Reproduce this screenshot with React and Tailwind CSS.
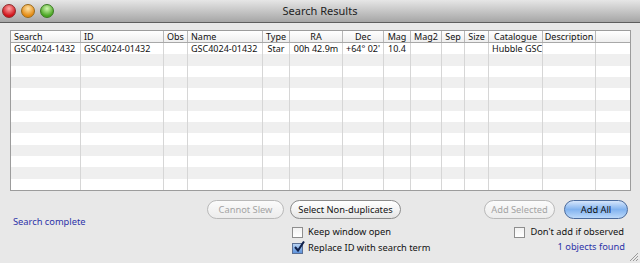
import React from "react";

const cols = [
  { name: "Search", w: 70, align: "text-left pl-[3px]" },
  { name: "ID", w: 83, align: "text-left pl-[3px]" },
  { name: "Obs", w: 24, align: "text-center" },
  { name: "Name", w: 75, align: "text-left pl-[3px]" },
  { name: "Type", w: 27, align: "text-center" },
  { name: "RA", w: 53, align: "text-center" },
  { name: "Dec", w: 41, align: "text-center" },
  { name: "Mag", w: 27, align: "text-center" },
  { name: "Mag2", w: 31, align: "text-center" },
  { name: "Sep", w: 23, align: "text-center" },
  { name: "Size", w: 24, align: "text-center" },
  { name: "Catalogue", w: 54, align: "text-center" },
  { name: "Description", w: 53, align: "text-center" },
  { name: "", w: 34, align: "text-center" },
];

const data = [
  { v: "GSC4024-1432", a: "text-left pl-[3px]" },
  { v: "GSC4024-01432", a: "text-left pl-[3px]" },
  { v: "", a: "" },
  { v: "GSC4024-01432", a: "text-left pl-[3px]" },
  { v: "Star", a: "text-center" },
  { v: "00h 42.9m", a: "text-center" },
  { v: "+64° 02'", a: "text-center" },
  { v: "10.4", a: "text-left pl-[4px]" },
  { v: "", a: "" },
  { v: "", a: "" },
  { v: "", a: "" },
  { v: "Hubble GSC", a: "text-left pl-[3px]" },
  { v: "", a: "" },
  { v: "", a: "" },
];

function Light({ from, to, border }) {
  return (
    <div
      className="w-[14px] h-[14px] rounded-full border"
      style={{
        background: `radial-gradient(circle at 50% 30%, ${from} 0%, ${to} 70%)`,
        borderColor: border,
      }}
    />
  );
}

function Btn({ children, w, disabled, primary }) {
  let cls =
    "h-[19px] rounded-full border flex items-center justify-center text-[9.3px] leading-none shrink-0 ";
  if (primary) {
    cls +=
      "border-[#4b6b9c] text-[#111] bg-gradient-to-b from-[#d6e6fb] via-[#82b3ef] to-[#bcd9fa]";
  } else if (disabled) {
    cls += "border-[#b9b9b9] text-[#a3a3a3] bg-gradient-to-b from-[#fbfbfb] to-[#ececec]";
  } else {
    cls += "border-[#8c8c8c] text-[#111] bg-gradient-to-b from-[#ffffff] via-[#f4f4f4] to-[#e4e4e4]";
  }
  return (
    <div className={cls} style={{ width: w }}>
      {children}
    </div>
  );
}

function Check({ checked, label }) {
  return (
    <div className="flex items-center gap-[5px] h-[14px]">
      {checked ? (
        <div className="w-[11px] h-[11px] border border-[#5a6f94] bg-gradient-to-b from-[#b7d2f2] to-[#5d93dc] relative">
          <svg viewBox="0 0 12 12" className="absolute left-[0px] top-[-3px] w-[12px] h-[12px]">
            <path d="M2 6 L5 9.5 L11 0.5" fill="none" stroke="#10204a" strokeWidth="2" />
          </svg>
        </div>
      ) : (
        <div className="w-[11px] h-[11px] border border-[#8e8e8e] bg-gradient-to-b from-[#f2f2f2] to-[#ffffff]" />
      )}
      <span className="text-[9.3px] text-[#111] leading-none">{label}</span>
    </div>
  );
}

export default function App() {
  return (
    <div
      className="w-[640px] h-[263px] bg-[#e8e8e8] flex flex-col overflow-hidden relative"
      style={{ fontFamily: '"Noto Sans", "DejaVu Sans", sans-serif' }}
    >
      {/* title bar */}
      <div className="h-[23px] shrink-0 bg-gradient-to-b from-[#e6e6e6] via-[#c6c6c6] to-[#a6a6a6] border-b border-[#5e5e5e] flex items-center relative">
        <div className="flex items-center gap-[5px] pl-[2px]">
          <Light from="#ffa8a8" to="#d0121a" border="#8e2a2a" />
          <Light from="#ffe4a8" to="#e38a14" border="#9a6a1a" />
          <Light from="#d0f7b0" to="#4aa624" border="#3a7a22" />
        </div>
        <div className="absolute inset-0 flex items-center justify-center text-[11px] text-[#222]">
          Search Results
        </div>
      </div>

      {/* table */}
      <div className="pt-[7px] pl-[10px]">
        <div className="w-[621px] border border-[#9c9c9c] bg-white">
          <div className="flex h-[12px] border-b border-[#a8a8a8] bg-gradient-to-b from-[#ffffff] to-[#eeeeee]">
            {cols.map((c, i) => (
              <div
                key={i}
                className={`shrink-0 text-[9px] leading-[11px] text-[#111] whitespace-nowrap overflow-hidden ${c.align} ${i < cols.length - 1 ? "border-r border-[#b8b8b8]" : ""}`}
                style={{ width: c.w }}
              >
                {c.name}
              </div>
            ))}
          </div>
          <div className="grid grid-rows-[repeat(13,1fr)] h-[147px]">
            {Array.from({ length: 13 }).map((_, r) => (
              <div key={r} className={`flex ${r % 2 === 1 ? "bg-[#efefef]" : "bg-white"}`}>
                {cols.map((c, i) => (
                  <div
                    key={i}
                    className={`shrink-0 text-[9px] leading-[11px] text-[#111] whitespace-nowrap overflow-hidden ${r === 0 ? data[i].a : ""} ${i < cols.length - 1 ? "border-r border-[#d6d6d6]" : ""}`}
                    style={{ width: c.w }}
                  >
                    {r === 0 ? data[i].v : ""}
                  </div>
                ))}
              </div>
            ))}
          </div>
        </div>
      </div>

      {/* bottom */}
      <div className="flex pl-[13px] pr-[12px] pt-[9px]">
        <div className="w-[194px] pt-[17px] text-[9.3px] text-[#2d33a8] leading-none">
          Search complete
        </div>
        <div className="flex flex-col">
          <div className="flex gap-[6px]">
            <Btn w={77} disabled>Cannot Slew</Btn>
            <Btn w={111}>Select Non-duplicates</Btn>
          </div>
          <div className="flex flex-col pl-[85px] pt-[6px] gap-[2px]">
            <Check label="Keep window open" />
            <Check checked label="Replace ID with search term" />
          </div>
        </div>
        <div className="flex-1 flex flex-col items-end">
          <div className="flex gap-[9px]">
            <Btn w={71} disabled>Add Selected</Btn>
            <Btn w={64} primary>Add All</Btn>
          </div>
          <div className="pt-[6px] pr-[4px]">
            <Check label="Don't add if observed" />
          </div>
          <div className="pt-[3px] pr-[3px] text-[9.3px] text-[#2d33a8] leading-none">
            1 objects found
          </div>
        </div>
      </div>

      {/* resize grip */}
      <svg className="absolute right-[1px] bottom-[1px] w-[11px] h-[11px]" viewBox="0 0 11 11">
        <path d="M10 2 L2 10 M10 5 L5 10 M10 8 L8 10" stroke="#9a9a9a" strokeWidth="1" />
      </svg>
    </div>
  );
}
